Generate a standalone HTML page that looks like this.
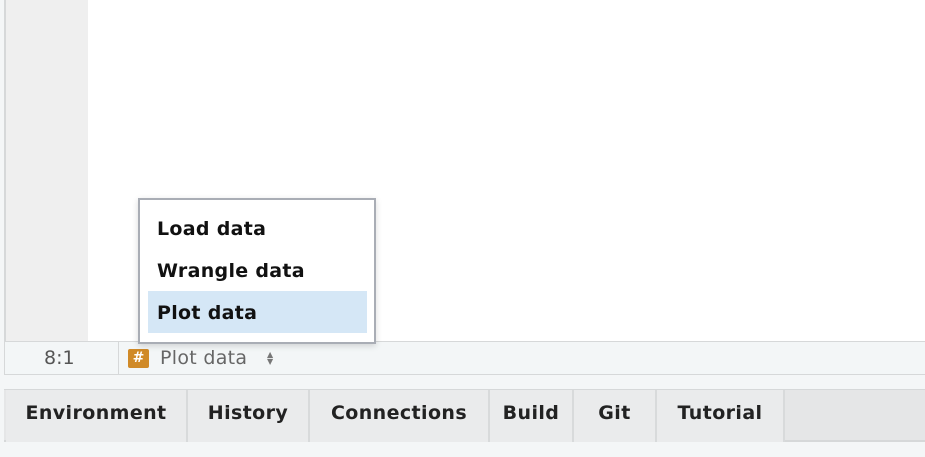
<!DOCTYPE html>
<html><head><style>
*{margin:0;padding:0;box-sizing:border-box}
body{width:925px;height:457px;background:#f4f6f7;position:relative;overflow:hidden;font-family:"DejaVu Sans",sans-serif}
.abs{position:absolute}
.tab{position:absolute;top:390px;height:52px;background:#eaebec;border-right:2px solid #d8dadb;font-weight:bold;font-size:19px;letter-spacing:0.4px;color:#222;text-align:center;line-height:46px;white-space:nowrap}
.item{position:absolute;left:17px;font-weight:bold;font-size:19px;letter-spacing:0.3px;color:#111}
</style></head><body>
<div class="abs" style="left:4px;top:0;width:2px;height:343px;background:#d6d8d9"></div>
<div class="abs" style="left:6px;top:0;width:82px;height:342px;background:#efefef"></div>
<div class="abs" style="left:88px;top:0;width:837px;height:342px;background:#fff"></div>
<div class="abs" style="left:4px;top:341px;width:921px;height:34px;background:#f3f6f7;border-top:1px solid #d6d8d9;border-bottom:1px solid #d6d8d9;border-left:1px solid #d6d8d9"></div>
<div class="abs" style="left:118px;top:342px;width:1px;height:32px;background:#d6d8d9"></div>
<div class="abs" style="left:44px;top:347px;font-size:19px;color:#555">8:1</div>
<div class="abs" style="left:128px;top:349px;width:21px;height:19px;background:#d08a28;border-radius:2px;color:#fff;font-size:14px;font-weight:bold;text-align:center;line-height:19px">#</div>
<div class="abs" style="left:160px;top:347px;font-size:19px;letter-spacing:0.3px;color:#666">Plot data</div>
<div class="abs" style="left:267px;top:351px;font-size:8px;color:#777;line-height:7px">▲<br>▼</div>
<div class="abs" style="left:4px;top:389px;width:921px;height:53px;background:#e5e6e7;border-top:1px solid #d6d8d9;border-bottom:2px solid #d6d8d9"></div>
<div class="tab" style="left:6px;width:182px">Environment</div>
<div class="tab" style="left:188px;width:122px">History</div>
<div class="tab" style="left:310px;width:180px">Connections</div>
<div class="tab" style="left:490px;width:84px">Build</div>
<div class="tab" style="left:574px;width:83px">Git</div>
<div class="tab" style="left:657px;width:128px">Tutorial</div>
<div class="abs" style="left:138px;top:198px;width:238px;height:146px;background:#fff;border:2px solid #a9adb5;box-shadow:0 2px 6px rgba(0,0,0,.15)">
<div class="abs" style="left:8px;top:91px;width:219px;height:42px;background:#d5e7f6"></div>
<div class="item" style="top:18px">Load data</div>
<div class="item" style="top:60px">Wrangle data</div>
<div class="item" style="top:102px">Plot data</div>
</div>
</body></html>
